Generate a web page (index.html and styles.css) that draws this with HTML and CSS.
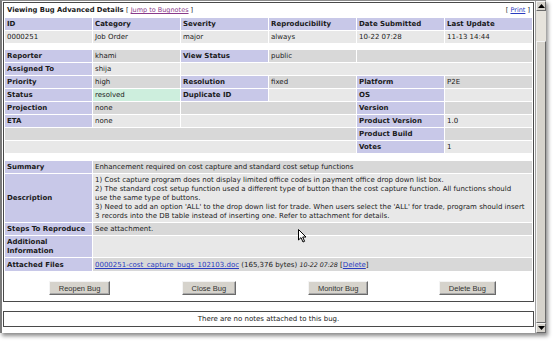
FILE: index.html
```html
<!DOCTYPE html>
<html>
<head>
<meta charset="utf-8">
<link rel="stylesheet" href="styles.css">
</head>
<body>
<div class="shot">
  <div class="window">
    <div class="viewport">
      <table class="bug">
        <colgroup><col><col><col><col><col><col></colgroup>
        <tr class="title-row">
          <td colspan="3" class="form-title">Viewing Bug Advanced Details <span class="small">[ <a class="visited" href="#bugnotes">Jump to Bugnotes</a> ]</span></td>
          <td colspan="3" class="right"><span class="small">[ <a href="#print">Print</a> ]</span></td>
        </tr>
        <tr class="cat">
          <td>ID</td><td>Category</td><td>Severity</td><td>Reproducibility</td><td>Date Submitted</td><td>Last Update</td>
        </tr>
        <tr class="row-2">
          <td>0000251</td><td>Job Order</td><td>major</td><td>always</td><td>10-22 07:28</td><td>11-13 14:44</td>
        </tr>
        <tr class="spacer"><td colspan="6"></td></tr>
        <tr class="row-1">
          <td class="label">Reporter</td><td>khami</td><td class="label">View Status</td><td>public</td><td colspan="2"></td>
        </tr>
        <tr class="row-2">
          <td class="label">Assigned To</td><td>shija</td><td colspan="4"></td>
        </tr>
        <tr class="row-1">
          <td class="label">Priority</td><td>high</td><td class="label">Resolution</td><td>fixed</td><td class="label">Platform</td><td>P2E</td>
        </tr>
        <tr class="row-2">
          <td class="label">Status</td><td class="resolved">resolved</td><td class="label">Duplicate ID</td><td></td><td class="label">OS</td><td></td>
        </tr>
        <tr class="row-1">
          <td class="label">Projection</td><td>none</td><td colspan="2"></td><td class="label">Version</td><td></td>
        </tr>
        <tr class="row-2">
          <td class="label">ETA</td><td>none</td><td colspan="2"></td><td class="label">Product Version</td><td>1.0</td>
        </tr>
        <tr class="row-1">
          <td colspan="4"></td><td class="label">Product Build</td><td></td>
        </tr>
        <tr class="row-2">
          <td colspan="4"></td><td class="label">Votes</td><td>1</td>
        </tr>
        <tr class="spacer spacer-b"><td colspan="6"></td></tr>
        <tr class="row-1">
          <td class="label">Summary</td><td colspan="5">Enhancement required on cost capture and standard cost setup functions</td>
        </tr>
        <tr class="row-2">
          <td class="label">Description</td><td colspan="5" class="desc"><span class="ln">1) Cost capture program does not display limited office codes in payment office drop down list box.</span><span class="ln">2) The standard cost setup function used a different type of button than the cost capture function. All functions should</span><span class="ln">use the same type of buttons.</span><span class="ln">3) Need to add an option 'ALL' to the drop down list for trade. When users select the 'ALL' for trade, program should insert</span><span class="ln">3 records into the DB table instead of inserting one. Refer to attachment for details.</span></td>
        </tr>
        <tr class="row-1">
          <td class="label">Steps To Reproduce</td><td colspan="5">See attachment.</td>
        </tr>
        <tr class="row-2">
          <td class="label">Additional Information</td><td colspan="5"></td>
        </tr>
        <tr class="row-1">
          <td class="label">Attached Files</td><td colspan="5"><a href="#file">0000251-cost_capture_bugs_102103.doc</a> (165,376 bytes) <span class="date">10-22 07:28</span> [<a href="#delete">Delete</a>]</td>
        </tr>
        <tr class="actions">
          <td colspan="6">
            <div class="btnbar">
              <div class="slot"><button type="button">Reopen Bug</button></div>
              <div class="slot"><button type="button">Close Bug</button></div>
              <div class="slot"><button type="button">Monitor Bug</button></div>
              <div class="slot"><button type="button">Delete Bug</button></div>
            </div>
          </td>
        </tr>
      </table>
      <table class="notes">
        <tr><td>There are no notes attached to this bug.</td></tr>
      </table>
      <svg class="cursor" width="10" height="15" viewBox="0 0 10 15"><path d="M0.5 0.5 L0.5 11 L3 8.6 L5 13 L6.6 12.3 L4.7 8 L8 8 Z" fill="#fff" stroke="#000" stroke-width="1"/></svg>
    </div>
    <div class="scrollbar">
      <div class="sb-btn"><svg width="7" height="4" viewBox="0 0 7 4"><path d="M3.5 0 L7 4 L0 4 Z" fill="#000"/></svg></div>
      <div class="sb-track"><div class="sb-thumb"></div></div>
      <div class="sb-btn"><svg width="7" height="4" viewBox="0 0 7 4"><path d="M0 0 L7 0 L3.5 4 Z" fill="#000"/></svg></div>
    </div>
  </div>
</div>
</body>
</html>
```

FILE: styles.css
```css
* { box-sizing: border-box; }
html, body { margin: 0; padding: 0; background: #fff; }
body {
  font-family: "DejaVu Sans", Verdana, sans-serif;
  font-size: 7px;
  color: #1a1a1a;
}
.shot { width: 553px; height: 341px; overflow: hidden; }
.window {
  width: 546px;
  height: 333px;
  display: flex;
  border-top: 1px solid #8c8c8c;
  border-left: 2px solid #7a7a7a;
  background: #fff;
  box-shadow: 2px 3px 4px rgba(0,0,0,0.45);
}
.viewport {
  position: relative;
  flex: 1;
  padding: 1px 0 0 1px;
}
.bug {
  width: 531px;
  table-layout: fixed;
  border: 1px solid #4a4a4a;
  border-spacing: 1px;
}
.bug td {
  padding: 2px 2px 1px;
  line-height: 9px;
  vertical-align: middle;
}
.title-row td { padding: 2px 2px 2px; background: #fff; }
.form-title { font-weight: bold; font-size: 6.8px; }
.small { font-size: 6.5px; font-weight: normal; }
.right { text-align: right; }
a { color: #2a3cc0; text-decoration: underline; }
a.visited { color: #8a3a8a; }
.cat td { background: #c8c8e8; font-weight: bold; }
.row-1 td { background: #d8d8d8; }
.row-2 td { background: #e8e8e8; }
.bug td.label { background: #c8c8e8; font-weight: bold; }
.bug td.resolved { background: #cdeedd; }
.spacer td { height: 5px; padding: 0; background: #fff; line-height: 0; }
.spacer-b td { height: 6px; }
.desc .ln { display: block; white-space: nowrap; }
.date { font-style: italic; font-size: 6.3px; }
.actions td { background: #fff; padding: 9px 0 5px 10px; }
.btnbar { display: flex; }
.slot { flex: 1; display: flex; justify-content: center; }
button {
  font-family: "Liberation Sans", Arial, sans-serif;
  font-size: 7.5px;
  color: #333;
  background: #d6d3cc;
  height: 14px;
  padding: 0 9px;
  border: 1px solid;
  border-color: #f4f4f4 #6a6a6a #6a6a6a #f4f4f4;
  box-shadow: inset -1px -1px 0 #a8a8a8;
}
.notes {
  margin-top: 9px;
  width: 531px;
  border: 1px solid #4a4a4a;
  border-spacing: 0;
}
.notes td {
  text-align: center;
  padding: 3px 2px 2px;
  line-height: 9px;
}
.cursor { position: absolute; left: 296px; top: 228px; }
.scrollbar {
  width: 11px;
  display: flex;
  flex-direction: column;
  background: #e6e3dc;
  border-left: 1px solid #a0a0a0;
}
.sb-btn {
  height: 10px;
  display: flex;
  align-items: center;
  justify-content: center;
  background: #d6d3cc;
  border: 1px solid;
  border-color: #f4f4f4 #6a6a6a #6a6a6a #f4f4f4;
}
.sb-track { flex: 1; padding-top: 30px; display: flex; flex-direction: column; }
.sb-thumb {
  flex: 1;
  background: #d6d3cc;
  border: 1px solid;
  border-color: #f4f4f4 #6a6a6a #6a6a6a #f4f4f4;
}
```
